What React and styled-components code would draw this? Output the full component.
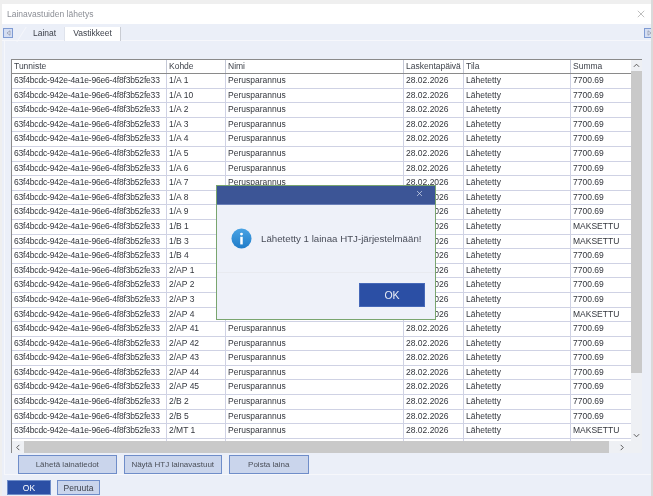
import styled, { createGlobalStyle } from "styled-components";

const GlobalStyle = createGlobalStyle`
  html, body { margin: 0; padding: 0; background: #f1f1f1; }
  body { font-family: "Liberation Sans", Arial, sans-serif; }
`;

const columns = "155px 59px 178px 60px 107px 60px";

const kohteet = [
  "1/A 1", "1/A 10", "1/A 2", "1/A 3", "1/A 4", "1/A 5", "1/A 6", "1/A 7", "1/A 8", "1/A 9",
  "1/B 1", "1/B 3", "1/B 4", "2/AP 1", "2/AP 2", "2/AP 3", "2/AP 4", "2/AP 41", "2/AP 42",
  "2/AP 43", "2/AP 44", "2/AP 45", "2/B 2", "2/B 5", "2/MT 1", "2/MT 2",
];
const maksetut = ["1/B 1", "1/B 3", "2/AP 4", "2/MT 1", "2/MT 2"];

const App = () => {
  return (
    <Page>
      <GlobalStyle />
      <Window>
        <TitleBar>
          <Title>Lainavastuiden lähetys</Title>
          <CloseIcon viewBox="0 0 10 10">
            <path d="M1 1 L9 9 M9 1 L1 9" />
          </CloseIcon>
        </TitleBar>
        <TabStrip>
          <TabArrow><ArrowGlyph viewBox="0 0 6 8"><path d="M5 1 L1 4 L5 7 Z" /></ArrowGlyph></TabArrow>
          <Tabs>
            <Tab $first>Lainat</Tab>
            <Tab $active>Vastikkeet</Tab>
          </Tabs>
          <TabArrow $end><ArrowGlyph viewBox="0 0 6 8"><path d="M1 1 L5 4 L1 7 Z" /></ArrowGlyph></TabArrow>
        </TabStrip>
        <Content>
          <Grid>
            <GridBody>
              <Table>
                <HeaderRow>
                  <HeaderCell>Tunniste</HeaderCell>
                  <HeaderCell>Kohde</HeaderCell>
                  <HeaderCell>Nimi</HeaderCell>
                  <HeaderCell>Laskentapäivä</HeaderCell>
                  <HeaderCell>Tila</HeaderCell>
                  <HeaderCell>Summa</HeaderCell>
                </HeaderRow>
                {kohteet.map((kohde) => (
                  <Row key={kohde}>
                    <IdCell>63f4bcdc-942e-4a1e-96e6-4f8f3b52fe33</IdCell>
                    <Cell>{kohde}</Cell>
                    <Cell>Perusparannus</Cell>
                    <Cell>28.02.2026</Cell>
                    <Cell>Lähetetty</Cell>
                    <Cell>{maksetut.includes(kohde) ? "MAKSETTU" : "7700.69"}</Cell>
                  </Row>
                ))}
              </Table>
              <VScroll>
                <ScrollArrow viewBox="0 0 8 6"><path d="M1 4.5 L4 1.5 L7 4.5" /></ScrollArrow>
                <VTrack><VThumb /></VTrack>
                <ScrollArrow viewBox="0 0 8 6"><path d="M1 1.5 L4 4.5 L7 1.5" /></ScrollArrow>
              </VScroll>
            </GridBody>
            <HScroll>
              <HArrow viewBox="0 0 6 8"><path d="M4.5 1 L1.5 4 L4.5 7" /></HArrow>
              <HThumb />
              <HArrow viewBox="0 0 6 8"><path d="M1.5 1 L4.5 4 L1.5 7" /></HArrow>
            </HScroll>
          </Grid>
          <ActionBar>
            <ActionButton $width={98.5}>Lähetä lainatiedot</ActionButton>
            <ActionButton $width={98.5}>Näytä HTJ lainavastuut</ActionButton>
            <ActionButton $width={79.5}>Poista laina</ActionButton>
          </ActionBar>
        </Content>
        <Footer>
          <PrimaryButton>OK</PrimaryButton>
          <CancelButton>Peruuta</CancelButton>
        </Footer>
      </Window>
      <Dialog>
        <DialogHead>
          <DialogClose viewBox="0 0 10 10"><path d="M1.5 1.5 L8.5 8.5 M8.5 1.5 L1.5 8.5" /></DialogClose>
        </DialogHead>
        <DialogBody>
          <InfoIcon viewBox="0 0 22 22">
            <defs>
              <linearGradient id="infoFill" x1="0" y1="0" x2="0" y2="1">
                <stop offset="0" stopColor="#4aa3e4" />
                <stop offset="1" stopColor="#1f7cc9" />
              </linearGradient>
            </defs>
            <circle cx="11" cy="11" r="10.5" fill="url(#infoFill)" />
            <circle cx="11" cy="6.4" r="1.5" fill="#fff" />
            <rect x="9.7" y="9.2" width="2.6" height="8" fill="#fff" />
          </InfoIcon>
          <DialogText>Lähetetty 1 lainaa HTJ-järjestelmään!</DialogText>
        </DialogBody>
        <DialogFooter>
          <DialogOk>OK</DialogOk>
        </DialogFooter>
      </Dialog>
    </Page>
  );
};

const Page = styled.div`
  position: relative;
  width: 653px;
  height: 496px;
  overflow: hidden;
  padding: 4px 0 0 2px;
  box-sizing: border-box;
  background: #efefef;
  border-right: 2px solid #dadada;
  filter: blur(0.3px);
`;

const Window = styled.div`
  width: 649px;
  height: 492px;
  display: flex;
  flex-direction: column;
  background: #ebeff8;
  overflow: hidden;
`;

const TitleBar = styled.div`
  height: 20px;
  flex: none;
  background: #fff;
  display: flex;
  align-items: center;
  justify-content: space-between;
  padding: 0 6px 0 5px;
`;

const Title = styled.span`
  font-size: 8.5px;
  color: #8c8f96;
`;

const CloseIcon = styled.svg`
  width: 8px;
  height: 8px;
  fill: none;
  stroke: #a5a5a5;
  stroke-width: 0.9;
`;

const TabStrip = styled.div`
  height: 17px;
  flex: none;
  display: flex;
  align-items: flex-start;
  padding: 3px 0 0 1px;
  box-sizing: border-box;
  border-bottom: 1px solid #f6f7fb;
`;

const TabArrow = styled.div`
  width: 8px;
  height: 8px;
  flex: none;
  margin-top: 1px;
  margin-right: ${({ $end }) => ($end ? "-3px" : "0")};
  border: 1px solid #7f9bd3;
  background: #d5def2;
  display: flex;
  align-items: center;
  justify-content: center;
`;

const ArrowGlyph = styled.svg`
  width: 5px;
  height: 6px;
  fill: #dfe5f4;
  stroke: #7d8598;
  stroke-width: 0.8;
`;

const Tabs = styled.div`
  flex: 1;
  display: flex;
  padding-left: 12px;
`;

const Tab = styled.div`
  position: relative;
  height: 13px;
  padding: 1px 8px 0;
  font-size: 8.5px;
  line-height: 11px;
  color: #3b3f48;
  background: ${({ $active }) => ($active ? "#fff" : "transparent")};
  border-right: 1px solid ${({ $active }) => ($active ? "#c9ccd3" : "#dfe3ec")};

  &::before {
    content: "";
    display: ${({ $first }) => ($first ? "block" : "none")};
    position: absolute;
    left: -4px;
    top: 0;
    width: 1px;
    height: 15px;
    background: #f6f7fb;
    transform: skewX(-32deg);
  }
`;

const Content = styled.div`
  flex: none;
  height: 434px;
  box-sizing: border-box;
  margin-left: 2px;
  padding: 18px 0 0 6px;
  border-bottom: 1px solid #f6f7fb;
  border-left: 1px solid #f6f7fb;
`;

const Grid = styled.div`
  width: 631px;
  height: 394px;
  background: #fff;
  border-left: 1px solid #8a8a8a;
  border-top: 1px solid #8a8a8a;
  box-sizing: border-box;
  display: flex;
  flex-direction: column;
`;

const GridBody = styled.div`
  flex: 1;
  min-height: 0;
  display: flex;
`;

const Table = styled.div`
  width: 619px;
  flex: none;
  overflow: hidden;
`;

const HeaderRow = styled.div`
  display: grid;
  grid-template-columns: ${columns};
  height: 13px;
  border-bottom: 1px solid #8a8a8a;
`;

const HeaderCell = styled.div`
  font-size: 8.5px;
  line-height: 13px;
  padding-left: 2px;
  color: #3f434b;
  white-space: nowrap;
  overflow: hidden;
  border-right: 1px solid #c4c8d6;
  &:last-child { border-right: none; }
`;

const Row = styled.div`
  display: grid;
  grid-template-columns: ${columns};
  height: 14.6px;
  box-sizing: border-box;
  border-bottom: 1px solid #cfd2e4;
`;

const Cell = styled.div`
  font-size: 8.5px;
  line-height: 13.6px;
  padding-left: 2px;
  color: #33363d;
  white-space: nowrap;
  overflow: hidden;
  border-right: 1px solid #cfd2e4;
  &:last-child { border-right: none; }
`;

const IdCell = styled(Cell)`
  letter-spacing: -0.18px;
`;

const VScroll = styled.div`
  width: 11px;
  flex: none;
  background: #eef0f4;
  display: flex;
  flex-direction: column;
  align-items: center;
`;

const ScrollArrow = styled.svg`
  flex: none;
  width: 7px;
  height: 7px;
  margin: 2px;
  fill: none;
  stroke: #555;
  stroke-width: 1.1;
`;

const VTrack = styled.div`
  flex: 1;
  width: 100%;
`;

const VThumb = styled.div`
  width: 100%;
  height: 302px;
  background: #c9c9c9;
`;

const HScroll = styled.div`
  height: 12px;
  flex: none;
  background: #eef0f4;
  display: flex;
  align-items: center;
`;

const HArrow = styled.svg`
  flex: none;
  width: 6px;
  height: 7px;
  margin: 0 3px;
  fill: none;
  stroke: #555;
  stroke-width: 1.1;

  &:last-child { margin-left: 10px; }
`;

const HThumb = styled.div`
  width: 585px;
  height: 100%;
  flex: none;
  background: #c9c9c9;
`;

const ActionBar = styled.div`
  display: flex;
  gap: 7px;
  padding: 2px 0 0 7px;
`;

const ActionButton = styled.button`
  width: ${({ $width }) => $width}px;
  height: 19px;
  padding: 0;
  box-sizing: border-box;
  background: #cad5ec;
  border: 1px solid #6f8dc9;
  font: 8px "Liberation Sans", Arial, sans-serif;
  color: #4b4f58;
`;

const Footer = styled.div`
  flex: 1;
  display: flex;
  gap: 6px;
  padding: 5px 0 0 5px;
`;

const PrimaryButton = styled.button`
  width: 44px;
  height: 15px;
  padding: 0;
  background: #2b4fa5;
  border: 1px solid #6f8dc9;
  font: 8.5px "Liberation Sans", Arial, sans-serif;
  color: #fff;
`;

const CancelButton = styled.button`
  width: 43px;
  height: 15px;
  padding: 0;
  background: #cad5ec;
  border: 1px solid #6f8dc9;
  font: 8.5px "Liberation Sans", Arial, sans-serif;
  color: #3b3f48;
`;

const Dialog = styled.div`
  position: absolute;
  left: 216px;
  top: 185px;
  width: 220px;
  height: 135px;
  box-sizing: border-box;
  border: 1px solid #79a56f;
  background: #eef1f9;
  display: flex;
  flex-direction: column;
`;

const DialogHead = styled.div`
  height: 19px;
  flex: none;
  background: #3c5596;
  border-bottom: 1px solid #6b80b8;
  box-sizing: border-box;
  display: flex;
  justify-content: flex-end;
  padding: 4px 12px 0 0;
`;

const DialogClose = styled.svg`
  width: 7px;
  height: 7px;
  fill: none;
  stroke: #d9dfee;
  stroke-width: 1;
`;

const DialogBody = styled.div`
  height: 68px;
  flex: none;
  box-sizing: border-box;
  border-bottom: 1px solid #e8eaf0;
  display: flex;
  align-items: center;
  gap: 9px;
  padding-left: 14px;
`;

const InfoIcon = styled.svg`
  width: 21px;
  height: 21px;
  flex: none;
`;

const DialogText = styled.span`
  font-size: 9.7px;
  color: #4a4e5a;
  white-space: nowrap;
`;

const DialogFooter = styled.div`
  flex: 1;
  display: flex;
  justify-content: flex-end;
  padding: 10px 10px 0 0;
`;

const DialogOk = styled.button`
  width: 66px;
  height: 24px;
  padding: 0;
  background: #2b4fa5;
  border: 1px solid #4668b8;
  font: 10.5px "Liberation Sans", Arial, sans-serif;
  color: #e8ecf6;
`;

export default App;
